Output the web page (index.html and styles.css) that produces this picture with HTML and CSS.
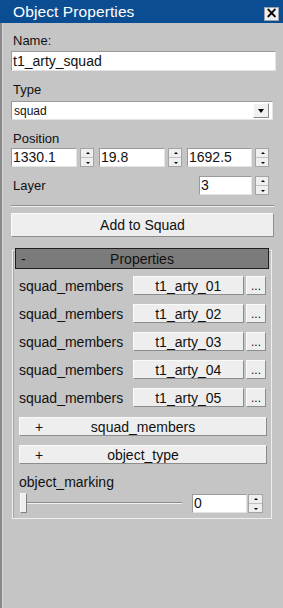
FILE: index.html
```html
<!DOCTYPE html>
<html lang="en">

<head>
    <meta charset="UTF-8">
    <meta name="viewport" content="width=device-width, initial-scale=1.0">
    <title>Object Properties</title>
    <link rel="stylesheet" href="styles.css">
</head>

<body>
    <div class="window">
        <div class="titlebar">
            <span class="title">Object Properties</span>
            <button class="close">&times;</button>
        </div>

        <div class="content">
            <div class="label name-label">Name:</div>
            <div class="textbox">t1_arty_squad</div>

            <div class="label section-label">Type</div>
            <div class="select">
                <span>squad</span>
                <span class="drop"><span class="tri-down"></span></span>
            </div>

            <div class="label section-label">Position</div>
            <div class="position">
                <div class="spinbox">
                    <div class="spin-input">1330.1</div>
                    <div class="spin"><span class="up"></span><span class="down"></span></div>
                </div>
                <div class="spinbox">
                    <div class="spin-input">19.8</div>
                    <div class="spin"><span class="up"></span><span class="down"></span></div>
                </div>
                <div class="spinbox">
                    <div class="spin-input">1692.5</div>
                    <div class="spin"><span class="up"></span><span class="down"></span></div>
                </div>
            </div>

            <div class="layer-row">
                <div class="label">Layer</div>
                <div class="spinbox layer-spin">
                    <div class="spin-input">3</div>
                    <div class="spin"><span class="up"></span><span class="down"></span></div>
                </div>
            </div>

            <div class="separator"></div>

            <button class="btn add-btn">Add to Squad</button>

            <div class="group">
                <div class="group-header">
                    <span class="toggle">-</span>
                    <span class="header-text">Properties</span>
                </div>

                <div class="prop-row">
                    <span class="prop-name">squad_members</span>
                    <button class="btn prop-value">t1_arty_01</button>
                    <button class="btn more">...</button>
                </div>
                <div class="prop-row">
                    <span class="prop-name">squad_members</span>
                    <button class="btn prop-value">t1_arty_02</button>
                    <button class="btn more">...</button>
                </div>
                <div class="prop-row">
                    <span class="prop-name">squad_members</span>
                    <button class="btn prop-value">t1_arty_03</button>
                    <button class="btn more">...</button>
                </div>
                <div class="prop-row">
                    <span class="prop-name">squad_members</span>
                    <button class="btn prop-value">t1_arty_04</button>
                    <button class="btn more">...</button>
                </div>
                <div class="prop-row">
                    <span class="prop-name">squad_members</span>
                    <button class="btn prop-value">t1_arty_05</button>
                    <button class="btn more">...</button>
                </div>

                <button class="btn expand-btn"><span class="plus">+</span><span class="expand-text">squad_members</span></button>
                <button class="btn expand-btn"><span class="plus">+</span><span class="expand-text">object_type</span></button>

                <div class="marking-label">object_marking</div>
                <div class="slider-row">
                    <div class="slider">
                        <span class="thumb"></span>
                        <span class="track"></span>
                    </div>
                    <div class="spinbox marking-spin">
                        <div class="spin-input">0</div>
                        <div class="spin"><span class="up"></span><span class="down"></span></div>
                    </div>
                </div>
            </div>
        </div>
    </div>
</body>

</html>
```

FILE: styles.css
```css
body {
    margin: 0;
    padding: 0;
    font-family: "Liberation Sans", Arial, sans-serif;
    background-color: #c5c5c5;
    color: #111;
}

.window {
    width: 283px;
    height: 608px;
    display: flex;
    flex-direction: column;
    background-color: #c5c5c5;
}

.titlebar {
    height: 23px;
    background-color: #0b4d93;
    display: flex;
    align-items: center;
    justify-content: space-between;
    padding: 0 4px 0 13px;
}

.title {
    color: #fff;
    font-size: 15.5px;
    letter-spacing: 0.1px;
    margin-top: 1px;
}

.close {
    width: 15px;
    height: 14px;
    padding: 0;
    margin-top: 4px;
    border: 1px solid #9aa4b0;
    background-color: #eef0f2;
    color: #000;
    font-family: "DejaVu Sans", sans-serif;
    font-size: 15px;
    font-weight: bold;
    line-height: 11px;
}

.content {
    flex: 1;
    padding: 0 9px 0 9px;
    border-left: 2px solid #8a8a8a;
    box-shadow: inset 1px 0 0 #d6d6d6;
}

.label {
    font-size: 13px;
    line-height: 15px;
    padding-left: 2px;
}

.name-label {
    margin-top: 10px;
}

.section-label {
    margin-top: 11px;
}

.textbox,
.spin-input {
    background-color: #fff;
    border: 1px solid;
    border-color: #9a9a9a #e4e4e4 #e4e4e4 #9a9a9a;
    font-size: 14px;
    line-height: 18px;
    padding-left: 1px;
    box-sizing: border-box;
}

.textbox {
    margin-top: 3px;
    height: 20px;
    width: 265px;
}

.select {
    margin-top: 4px;
    height: 19px;
    width: 262px;
    box-sizing: border-box;
    background-color: #fff;
    border: 1px solid;
    border-color: #9a9a9a #e4e4e4 #e4e4e4 #9a9a9a;
    display: flex;
    align-items: center;
    justify-content: space-between;
    font-size: 12px;
    padding-left: 2px;
}

.drop {
    width: 14px;
    height: 13px;
    margin-right: 3px;
    background-color: #f0f0f0;
    border: 1px solid;
    border-color: #fff #8a8a8a #8a8a8a #fff;
    display: flex;
    align-items: center;
    justify-content: center;
}

.tri-down {
    width: 0;
    height: 0;
    border-left: 3px solid transparent;
    border-right: 3px solid transparent;
    border-top: 4px solid #000;
}

.position {
    margin-top: 2px;
    display: grid;
    grid-template-columns: 83px 83px 82px;
    gap: 5px;
}

.spinbox {
    display: flex;
    height: 19px;
}

.spinbox .spin-input {
    flex: 1;
    height: 19px;
    line-height: 17px;
}

.spin {
    width: 14px;
    margin-left: 3px;
    display: flex;
    flex-direction: column;
    border: 1px solid #a4a4a4;
    background-color: #c0c0c0;
    gap: 1px;
    box-sizing: border-box;
}

.spin span {
    flex: 1;
    background-color: #efefef;
    position: relative;
}

.spin .up::after,
.spin .down::after {
    content: "";
    position: absolute;
    left: 5px;
    top: 3px;
    border-left: 2px solid transparent;
    border-right: 2px solid transparent;
}

.spin .up::after {
    border-bottom: 2px solid #000;
}

.spin .down::after {
    top: 4px;
    border-top: 2px solid #000;
}

.layer-row {
    margin-top: 9px;
    display: flex;
    align-items: center;
    justify-content: space-between;
    padding-right: 5px;
}

.layer-spin {
    width: 70px;
}

.separator {
    margin-top: 10px;
    width: 263px;
    height: 1px;
    background-color: #8e8e8e;
    border-bottom: 1px solid #f2f2f2;
}

.btn {
    font-family: "Liberation Sans", Arial, sans-serif;
    font-size: 14px;
    color: #111;
    background-color: #eeeeee;
    border: 1px solid;
    border-color: #fafafa #8c8c8c #8c8c8c #fafafa;
    padding: 0;
    box-sizing: border-box;
}

.add-btn {
    display: block;
    margin-top: 6px;
    width: 263px;
    height: 24px;
}

.group {
    margin: 13px 2px 0 1px;
    border: 1px solid #eeeeee;
    box-shadow: inset 1px 1px 0 #a8a8a8;
    padding: 0 5px 5px 2px;
}

.group-header {
    margin-top: -3px;
    margin-right: -3px;
    height: 21px;
    box-sizing: border-box;
    background-color: #7b7b7b;
    border: 1px solid #1e1e1e;
    display: flex;
    align-items: center;
    font-size: 14px;
    position: relative;
}

.toggle {
    padding-left: 5px;
}

.header-text {
    position: absolute;
    left: 0;
    right: 0;
    text-align: center;
}

.prop-row {
    margin-top: 7px;
    margin-left: 4px;
    display: flex;
    align-items: center;
    height: 19px;
}

.prop-row + .prop-row {
    margin-top: 9px;
}

.prop-name {
    width: 114px;
    font-size: 14px;
}

.prop-value {
    width: 112px;
    height: 19px;
}

.more {
    width: 20px;
    height: 19px;
    margin-left: 2px;
    font-size: 12px;
    line-height: 12px;
}

.expand-btn {
    margin-top: 10px;
    margin-left: 4px;
    width: 248px;
    height: 19px;
    display: flex;
    align-items: center;
    position: relative;
}

.expand-btn + .expand-btn {
    margin-top: 9px;
}

.plus {
    padding-left: 15px;
}

.expand-text {
    position: absolute;
    left: 0;
    right: 0;
    text-align: center;
}

.marking-label {
    margin-top: 10px;
    margin-left: 4px;
    font-size: 14px;
    line-height: 16px;
}

.slider-row {
    margin-top: 3px;
    margin-left: 5px;
    display: flex;
    align-items: center;
    height: 20px;
}

.slider {
    width: 162px;
    display: flex;
    align-items: center;
    height: 20px;
}

.thumb {
    width: 7px;
    height: 20px;
    box-sizing: border-box;
    background-color: #efefef;
    border: 1px solid;
    border-color: #fafafa #808080 #808080 #fafafa;
}

.track {
    flex: 1;
    height: 1px;
    background-color: #8a8a8a;
    border-bottom: 1px solid #f2f2f2;
}

.marking-spin {
    margin-left: 10px;
    width: 71px;
}

.marking-spin .spin {
    width: 15px;
    margin-left: 1px;
}
```
